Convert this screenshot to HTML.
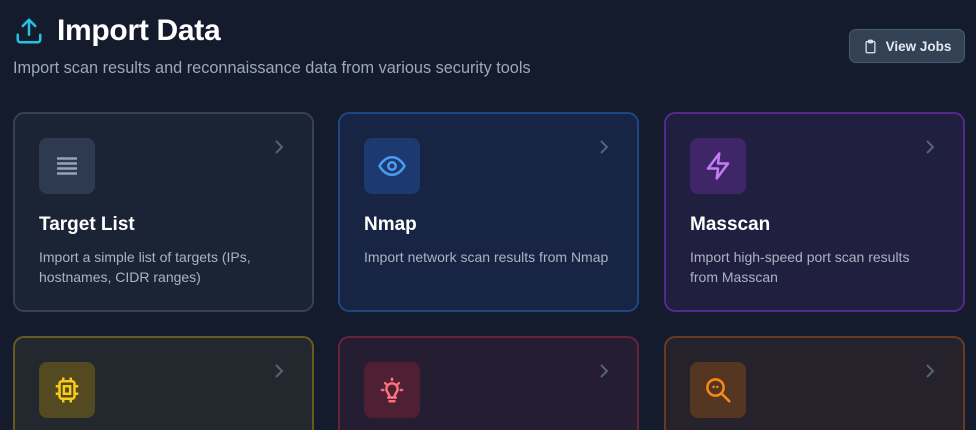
<!DOCTYPE html>
<html><head><style>
*{margin:0;padding:0;box-sizing:border-box}
html,body{width:976px;height:430px;overflow:hidden}
body{background:#131b2c;font-family:"Liberation Sans",sans-serif;position:relative}
.h{position:absolute;left:14px;top:14px;display:flex;align-items:center}
.h h1{color:#fff;font-size:30px;font-weight:bold;margin-left:13px;letter-spacing:-0.3px}
.sub{position:absolute;left:13px;top:59px;color:#9ca8bb;font-size:16.3px}
.btn{position:absolute;left:849px;top:29px;width:116px;height:34px;background:#334155;border:1px solid #4b5a70;border-radius:7px;color:#e2e8f0;font-size:13.5px;font-weight:bold;display:flex;align-items:center;justify-content:center;gap:8px}
.card{position:absolute;width:301px;height:200px;border-radius:11px;border:2px solid}
.ib{position:absolute;left:24px;top:24px;width:56px;height:56px;border-radius:8px;display:flex;align-items:center;justify-content:center}
.ib svg{width:30px;height:30px}
.chev{position:absolute;right:28px;top:26px}
.t{position:absolute;left:24px;top:100px;color:#fff;font-size:19px;font-weight:bold}
.d{position:absolute;left:24px;top:133px;width:250px;color:#a9b3c3;font-size:14px;line-height:20px}
</style></head><body>
<div class="h"><svg width="30" height="30" viewBox="0 0 24 24" fill="none" stroke="#22c3e6" stroke-width="2" stroke-linecap="round" stroke-linejoin="round"><path d="M3 15v4a2 2 0 0 0 2 2h14a2 2 0 0 0 2-2v-4M12 3v12M7 8l5-5 5 5"/></svg><h1>Import Data</h1></div>
<div class="sub">Import scan results and reconnaissance data from various security tools</div>
<div class="btn"><svg width="15" height="17" viewBox="0 0 24 24" fill="none" stroke="#e2e8f0" stroke-width="2"><rect x="5" y="4" width="14" height="18" rx="2"/><rect x="9" y="2" width="6" height="4" rx="1"/></svg>View Jobs</div>

<div class="card" style="left:13px;top:112px;background:#1b2435;border-color:#364152">
<div class="ib" style="background:#2d3a4f"><svg viewBox="0 0 24 24" stroke="#94a3b8" stroke-width="2"><path d="M4 6h16M4 10h16M4 14h16M4 18h16"/></svg></div>
<svg class="chev" width="10" height="14" viewBox="0 0 10 14" fill="none" stroke="#566378" stroke-width="2"><path d="M2 1l6 6-6 6"/></svg>
<div class="t">Target List</div><div class="d">Import a simple list of targets (IPs, hostnames, CIDR ranges)</div></div>

<div class="card" style="left:338px;top:112px;background:#172443;border-color:#1e4584">
<div class="ib" style="background:#1c3a70"><svg viewBox="0 0 24 24" fill="none" stroke="#4a9df5" stroke-width="2"><path d="M2 12s3.5-7 10-7 10 7 10 7-3.5 7-10 7S2 12 2 12z"/><circle cx="12" cy="12" r="3"/></svg></div>
<svg class="chev" width="10" height="14" viewBox="0 0 10 14" fill="none" stroke="#566378" stroke-width="2"><path d="M2 1l6 6-6 6"/></svg>
<div class="t">Nmap</div><div class="d">Import network scan results from Nmap</div></div>

<div class="card" style="left:664px;top:112px;background:#201f40;border-color:#55298a">
<div class="ib" style="background:#3e2668"><svg viewBox="0 0 24 24" fill="none" stroke="#c47cf5" stroke-width="2" stroke-linejoin="round"><path d="M13 2L4 14h8l-1 8 9-12h-8l1-8z"/></svg></div>
<svg class="chev" width="10" height="14" viewBox="0 0 10 14" fill="none" stroke="#566378" stroke-width="2"><path d="M2 1l6 6-6 6"/></svg>
<div class="t">Masscan</div><div class="d">Import high-speed port scan results from Masscan</div></div>

<div class="card" style="left:13px;top:336px;background:#22282e;border-color:#685a1f">
<div class="ib" style="background:#534a22"><svg viewBox="0 0 24 24" fill="none" stroke="#facc15" stroke-width="2"><rect x="6" y="5" width="12" height="14" rx="2"/><rect x="9.5" y="9" width="5" height="6"/><path d="M9 2v3M15 2v3M9 19v3M15 19v3M3 9h3M3 15h3M18 9h3M18 15h3"/></svg></div>
<svg class="chev" width="10" height="14" viewBox="0 0 10 14" fill="none" stroke="#566378" stroke-width="2"><path d="M2 1l6 6-6 6"/></svg></div>

<div class="card" style="left:338px;top:336px;background:#251d31;border-color:#66233a">
<div class="ib" style="background:#4f2033"><svg viewBox="0 0 24 24" fill="none" stroke="#f87178" stroke-width="2" stroke-linecap="round"><path d="M9 18h6M10 21h4M12 3v1M4 12h1M19 12h1M6.5 6.5l.7.7M17.5 6.5l-.7.7"/><path d="M8.5 14a4.5 4.5 0 1 1 7 0c-.8 1-1.5 2-1.5 4h-4c0-2-.7-3-1.5-4z"/></svg></div>
<svg class="chev" width="10" height="14" viewBox="0 0 10 14" fill="none" stroke="#566378" stroke-width="2"><path d="M2 1l6 6-6 6"/></svg></div>

<div class="card" style="left:664px;top:336px;background:#25222b;border-color:#683a22">
<div class="ib" style="background:#553623"><svg viewBox="0 0 24 24" fill="none" stroke="#fb8a14" stroke-width="2" stroke-linecap="round"><circle cx="10" cy="10" r="6.5"/><path d="M15 15l6 6"/><path d="M8.5 9.5h.01M11.5 9.5h.01"/></svg></div>
<svg class="chev" width="10" height="14" viewBox="0 0 10 14" fill="none" stroke="#566378" stroke-width="2"><path d="M2 1l6 6-6 6"/></svg></div>
</body></html>
